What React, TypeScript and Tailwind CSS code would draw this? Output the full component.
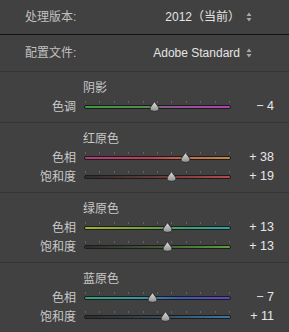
const cjk = { fontFamily: '"Liberation Sans", "Noto Sans CJK SC", sans-serif' };

type Slider = { label: string; value: number; gradient: string };
type Section = { title: string; sliders: Slider[] };

const sections: Section[] = [
  {
    title: "阴影",
    sliders: [{ label: "色调", value: -4, gradient: "bg-[linear-gradient(to_right,#3f9a3f,#5a8a55_45%,#8a5a8a_55%,#b440b4)]" }],
  },
  {
    title: "红原色",
    sliders: [
      { label: "色相", value: 38, gradient: "bg-[linear-gradient(to_right,#b43a7a,#b84050_45%,#c06a45_70%,#c0884a)]" },
      { label: "饱和度", value: 19, gradient: "bg-[linear-gradient(to_right,#2e2e2e,#6a3a3a_50%,#b84a4a)]" },
    ],
  },
  {
    title: "绿原色",
    sliders: [
      { label: "色相", value: 13, gradient: "bg-[linear-gradient(to_right,#a6b02a,#6aa040_45%,#3aa070_70%,#30a0a8)]" },
      { label: "饱和度", value: 13, gradient: "bg-[linear-gradient(to_right,#2e2e2e,#3e5a36_50%,#5aa040)]" },
    ],
  },
  {
    title: "蓝原色",
    sliders: [
      { label: "色相", value: -7, gradient: "bg-[linear-gradient(to_right,#38a07a,#3a90a8_40%,#3a5ab0_65%,#6a40c0)]" },
      { label: "饱和度", value: 11, gradient: "bg-[linear-gradient(to_right,#2e2e2e,#34485a_50%,#3a78a8)]" },
    ],
  },
];

function UpDown() {
  return (
    <svg width="6" height="10" viewBox="0 0 6 10" className="ml-[6px]">
      <path d="M3 0.5 L5.5 4 L0.5 4 Z" fill="#a8a8a8" />
      <path d="M3 9.5 L5.5 6 L0.5 6 Z" fill="#a8a8a8" />
    </svg>
  );
}

function Thumb() {
  return (
    <svg width="11" height="11" viewBox="0 0 11 11">
      <defs>
        <linearGradient id="tg" x1="0" y1="0" x2="0" y2="1">
          <stop offset="0" stopColor="#e0e0e0" />
          <stop offset="1" stopColor="#8e8e8e" />
        </linearGradient>
      </defs>
      <path
        d="M5.5 0.6 L8.6 4.8 Q10.4 6.8 9.9 8.4 Q9 10.4 5.5 10.4 Q2 10.4 1.1 8.4 Q0.6 6.8 2.4 4.8 Z"
        fill="url(#tg)"
        stroke="#262626"
        strokeWidth="0.9"
      />
    </svg>
  );
}

function SliderRow({ s }: { s: Slider }) {
  const left = ((s.value + 100) / 200) * 147;
  const txt = s.value < 0 ? `− ${Math.abs(s.value)}` : `+ ${s.value}`;
  return (
    <div className="flex h-[19px] items-center">
      <div className="w-[76px] text-right text-[12px] leading-none text-[#c8c8c8]">{s.label}</div>
      <div className="relative ml-[8px] h-full w-[147px]">
        <div className="absolute left-0 right-0 top-[4px] flex justify-between px-[1px]">
          {Array.from({ length: 11 }).map((_, i) => (
            <div key={i} className="h-[2px] w-[1px] bg-[#646464]" />
          ))}
        </div>
        <div className="absolute left-0 right-0 top-[8px] h-[4px] rounded-full border border-[#1c1c1c] bg-[#1c1c1c] p-0">
          <div className={`h-full w-full rounded-full ${s.gradient}`} />
        </div>
        <div className="absolute top-[4px]" style={{ left: left - 5.5 }}>
          <Thumb />
        </div>
      </div>
      <div className="flex-1 pr-[15px] text-right text-[12.5px] leading-none text-[#e8e8e8]">{txt}</div>
    </div>
  );
}

export default function App() {
  return (
    <div className="h-[332px] w-[289px] overflow-hidden bg-[#414141] text-[12px]" style={cjk}>
      <div className="flex h-[35px] items-center border-b border-[#121212] pl-[25px] pr-[37px]">
        <span className="text-[#c0c0c0]">处理版本:</span>
        <div className="ml-auto flex items-center text-[#e4e4e4]">
          <span>2012（当前）</span>
          <UpDown />
        </div>
      </div>
      <div className="flex h-[37px] items-center border-b border-[#353535] pl-[25px] pr-[37px]">
        <span className="text-[#c0c0c0]">配置文件:</span>
        <div className="ml-auto flex items-center text-[#e4e4e4]">
          <span>Adobe Standard</span>
          <UpDown />
        </div>
      </div>
      {sections.map((sec, i) => (
        <div key={i} className="border-b border-[#353535] py-[6px]">
          <div className="flex h-[19px] items-center pl-[83px] text-[#c8c8c8]">{sec.title}</div>
          {sec.sliders.map((s, j) => (
            <SliderRow key={j} s={s} />
          ))}
        </div>
      ))}
    </div>
  );
}
